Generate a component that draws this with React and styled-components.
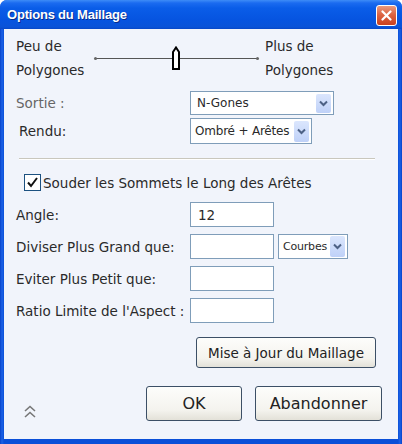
import React from 'react';
import styled, { createGlobalStyle } from 'styled-components';

const Global = createGlobalStyle`
  html, body { margin: 0; padding: 0; background: #fff; }
  body { font-family: "DejaVu Sans", "Liberation Sans", sans-serif; }
`;

const Window = styled.div`
  width: 402px;
  height: 444px;
  box-sizing: border-box;
  display: flex;
  flex-direction: column;
  background: linear-gradient(90deg, #0842c9 0px, #1c62e6 2px, #0a4fd8 4px, #0a4fd8 398px, #1c62e6 400px, #0842c9 402px);
  padding: 0 4px 5px 4px;
  border-radius: 7px 7px 0 0;
  overflow: hidden;
`;

const TitleBar = styled.div`
  height: 29px;
  margin: 0 -4px;
  padding: 0 5px 0 7px;
  display: flex;
  align-items: center;
  justify-content: space-between;
  background: linear-gradient(180deg, #3d8cf7 0px, #1b6bf0 3px, #0a5de8 8px, #0654e0 20px, #0a53d8 27px, #0747c8 29px);
`;

const Title = styled.span`
  color: #fff;
  font-family: "Liberation Sans", "DejaVu Sans", sans-serif;
  font-weight: bold;
  font-size: 13px;
  letter-spacing: -0.2px;
  text-shadow: 1px 1px 0 #0a2d8a;
`;

const CloseButton = styled.div`
  width: 19px;
  height: 19px;
  margin-top: 1px;
  border: 1px solid #fff;
  border-radius: 3px;
  display: flex;
  align-items: center;
  justify-content: center;
  background: linear-gradient(180deg, #e99a7e 0%, #dd6443 45%, #c9401f 100%);
`;

const Body = styled.div`
  flex: 1;
  background: #f1f4fb;
  padding: 8px 12px 0 12px;
  display: flex;
  flex-direction: column;
  color: #2a2a2a;
  font-size: 13px;
`;

const SliderRow = styled.div`
  display: flex;
  align-items: center;
  height: 42px;
`;

const SliderLabel = styled.div`
  width: ${p => p.$w}px;
  line-height: 24px;
  font-size: 13.5px;
`;

const Track = styled.div`
  position: relative;
  width: 163px;
  height: 1px;
  margin: 0 7px 0 0;
  background: #555;

  &::before, &::after {
    content: '';
    position: absolute;
    top: -1px;
    width: 3px;
    height: 3px;
    border-radius: 50%;
    background: #666;
  }
  &::before { left: -1px; }
  &::after { right: -1px; }
`;

const Thumb = styled.svg`
  position: absolute;
  left: 77px;
  top: -12px;
`;

const FormGrid = styled.div`
  display: grid;
  grid-template-columns: 174px auto;
  align-items: center;
  row-gap: ${p => p.$gap}px;
  margin-top: ${p => p.$mt || 0}px;
`;

const Label = styled.div`
  font-size: 13.5px;
  color: ${p => (p.$muted ? '#666' : '#2a2a2a')};
  padding-left: ${p => p.$pl || 0}px;
  white-space: nowrap;
`;

const Controls = styled.div`
  display: flex;
  gap: 4px;
  align-items: center;
`;

const Select = styled.div`
  width: ${p => p.$w}px;
  height: ${p => p.$h}px;
  box-sizing: border-box;
  border: 1px solid #7f9db9;
  background: #fff;
  display: flex;
  align-items: center;
  padding: 0 2px 0 ${p => p.$pl || 6}px;
  font-size: ${p => p.$fs || 12}px;
  letter-spacing: ${p => p.$ls || 0}px;
`;

const SelectText = styled.span`
  flex: 1;
  white-space: nowrap;
  overflow: hidden;
`;

const ArrowBox = styled.div`
  flex: none;
  width: 15px;
  height: ${p => p.$h}px;
  border-radius: 2px;
  background: linear-gradient(180deg, #dbe6fd 0%, #bfd1f8 100%);
  display: flex;
  align-items: center;
  justify-content: center;
`;

const Separator = styled.div`
  height: 1px;
  background: #c9c7bd;
  border-bottom: 1px solid #fff;
  margin: 14px 11px 0 3px;
`;

const CheckRow = styled.label`
  display: flex;
  align-items: center;
  gap: 2px;
  margin: 14px 0 0 8px;
  font-size: 13.5px;
`;

const CheckBox = styled.span`
  width: 15px;
  height: 15px;
  border: 1px solid #1c5180;
  background: #fff;
  display: flex;
  align-items: center;
  justify-content: center;
`;

const Input = styled.div`
  width: 84px;
  height: 25px;
  box-sizing: border-box;
  border: 1px solid #7f9db9;
  background: #fff;
  padding-left: 7px;
  display: flex;
  align-items: center;
  font-size: 13.5px;
`;

const RightRow = styled.div`
  display: flex;
  flex: ${p => (p.$grow ? 1 : 'none')};
  justify-content: flex-end;
  gap: 13px;
  margin-top: ${p => p.$mt}px;
  padding-right: ${p => p.$pr}px;
  align-items: flex-end;
`;

const Button = styled.div`
  width: ${p => p.$w}px;
  height: ${p => p.$h}px;
  box-sizing: border-box;
  border: 1px solid #3c4f66;
  border-radius: 3px;
  background: linear-gradient(180deg, #fdfdfb 0%, #f4f3ee 70%, #e3e1d8 100%);
  display: flex;
  align-items: center;
  justify-content: center;
  font-size: ${p => p.$fs}px;
  color: #222;
  white-space: nowrap;
`;

const Footer = styled.div`
  display: flex;
  align-items: flex-end;
  margin-top: 18px;
`;

const Expand = styled.svg`
  margin: 0 0 1px 6px;
`;

const Chevron = ({ h }) => (
  <ArrowBox $h={h}>
    <svg width="9" height="7" viewBox="0 0 9 7">
      <path d="M1 1.5 L4.5 5 L8 1.5" fill="none" stroke="#4d6185" strokeWidth="2" />
    </svg>
  </ArrowBox>
);

export default function App() {
  return (
    <>
      <Global />
      <Window>
        <TitleBar>
          <Title>Options du Maillage</Title>
          <CloseButton>
            <svg width="11" height="11" viewBox="0 0 11 11">
              <path d="M1.5 1.5 L9.5 9.5 M9.5 1.5 L1.5 9.5" stroke="#fff" strokeWidth="2.2" strokeLinecap="round" />
            </svg>
          </CloseButton>
        </TitleBar>
        <Body>
          <SliderRow>
            <SliderLabel $w={79}>Peu de<br />Polygones</SliderLabel>
            <Track>
              <Thumb width="8" height="25" viewBox="0 0 8 25">
                <path d="M1 6 L4 1.5 L7 6 L7 23 L1 23 Z" fill="#fff" stroke="#000" strokeWidth="2" />
              </Thumb>
            </Track>
            <SliderLabel $w={90}>Plus de<br />Polygones</SliderLabel>
          </SliderRow>

          <FormGrid $gap={3} $mt={12}>
            <Label $muted>Sortie :</Label>
            <Select $w={144} $h={24}>
              <SelectText>N-Gones</SelectText>
              <Chevron h={19} />
            </Select>
            <Label $pl={3}>Rendu:</Label>
            <Select $w={122} $h={26} $fs={12} $pl={4} $ls={-0.2}>
              <SelectText>Ombré + Arêtes</SelectText>
              <Chevron h={21} />
            </Select>
          </FormGrid>

          <Separator />

          <CheckRow>
            <CheckBox>
              <svg width="13" height="13" viewBox="0 0 13 13">
                <path d="M2 6.5 L5 10 L11 2" fill="none" stroke="#111" strokeWidth="2" />
              </svg>
            </CheckBox>
            Souder les Sommets le Long des Arêtes
          </CheckRow>

          <FormGrid $gap={7} $mt={11}>
            <Label>Angle:</Label>
            <Input>12</Input>
            <Label>Diviser Plus Grand que:</Label>
            <Controls>
              <Input />
              <Select $w={70} $h={25} $fs={11} $pl={4} $ls={-0.2}>
                <SelectText>Courbes</SelectText>
                <Chevron h={21} />
              </Select>
            </Controls>
            <Label>Eviter Plus Petit que:</Label>
            <Input />
            <Label>Ratio Limite de l'Aspect :</Label>
            <Input />
          </FormGrid>

          <RightRow $mt={14} $pr={10}>
            <Button $w={180} $h={31} $fs={13.5}>Mise à Jour du Maillage</Button>
          </RightRow>

          <Footer>
            <Expand width="16" height="16" viewBox="0 0 16 16">
              <path d="M3 7 L8 2.5 L13 7 M3 13 L8 8.5 L13 13" fill="none" stroke="#777" strokeWidth="1.6" />
            </Expand>
            <RightRow $mt={0} $pr={4} $grow>
              <Button $w={96} $h={35} $fs={16}>OK</Button>
              <Button $w={127} $h={35} $fs={16}>Abandonner</Button>
            </RightRow>
          </Footer>
        </Body>
      </Window>
    </>
  );
}
